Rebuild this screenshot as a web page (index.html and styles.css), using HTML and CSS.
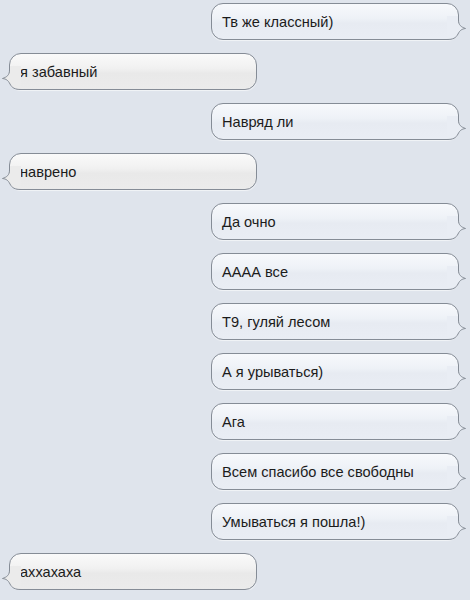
FILE: index.html
```html
<!DOCTYPE html>
<html lang="ru">
<head>
  <meta charset="UTF-8">
  <meta name="viewport" content="width=device-width, initial-scale=1.0">
  <title>Сообщения</title>
  <link rel="stylesheet" href="styles.css">
</head>
<body>

<div class="chat">
  <!-- Переписка -->
  <div class="bubble mine">Тв же классный)<svg class="tail" width="20" height="24" viewBox="0 0 20 24"><path class="tail-fill" d="M0 0 L11.5 0 L11.5 4 C11.5 9 14 11 18.5 12.5 C15 13 13 14 11 18 C9 22 6 23.5 0 23.5 Z"/><path class="tail-line" d="M11.5 0 L11.5 4 C11.5 9 14 11 18.5 12.5 C15 13 13 14 11 18 C9 22 6 23.5 0 23.5"/></svg></div>
  <div class="bubble theirs">я забавный<svg class="tail" width="20" height="24" viewBox="0 0 20 24"><path class="tail-fill" d="M0 0 L11.5 0 L11.5 4 C11.5 9 14 11 18.5 12.5 C15 13 13 14 11 18 C9 22 6 23.5 0 23.5 Z"/><path class="tail-line" d="M11.5 0 L11.5 4 C11.5 9 14 11 18.5 12.5 C15 13 13 14 11 18 C9 22 6 23.5 0 23.5"/></svg></div>
  <div class="bubble mine">Навряд ли<svg class="tail" width="20" height="24" viewBox="0 0 20 24"><path class="tail-fill" d="M0 0 L11.5 0 L11.5 4 C11.5 9 14 11 18.5 12.5 C15 13 13 14 11 18 C9 22 6 23.5 0 23.5 Z"/><path class="tail-line" d="M11.5 0 L11.5 4 C11.5 9 14 11 18.5 12.5 C15 13 13 14 11 18 C9 22 6 23.5 0 23.5"/></svg></div>
  <div class="bubble theirs">наврено<svg class="tail" width="20" height="24" viewBox="0 0 20 24"><path class="tail-fill" d="M0 0 L11.5 0 L11.5 4 C11.5 9 14 11 18.5 12.5 C15 13 13 14 11 18 C9 22 6 23.5 0 23.5 Z"/><path class="tail-line" d="M11.5 0 L11.5 4 C11.5 9 14 11 18.5 12.5 C15 13 13 14 11 18 C9 22 6 23.5 0 23.5"/></svg></div>
  <div class="bubble mine">Да очно<svg class="tail" width="20" height="24" viewBox="0 0 20 24"><path class="tail-fill" d="M0 0 L11.5 0 L11.5 4 C11.5 9 14 11 18.5 12.5 C15 13 13 14 11 18 C9 22 6 23.5 0 23.5 Z"/><path class="tail-line" d="M11.5 0 L11.5 4 C11.5 9 14 11 18.5 12.5 C15 13 13 14 11 18 C9 22 6 23.5 0 23.5"/></svg></div>
  <div class="bubble mine">АААА все<svg class="tail" width="20" height="24" viewBox="0 0 20 24"><path class="tail-fill" d="M0 0 L11.5 0 L11.5 4 C11.5 9 14 11 18.5 12.5 C15 13 13 14 11 18 C9 22 6 23.5 0 23.5 Z"/><path class="tail-line" d="M11.5 0 L11.5 4 C11.5 9 14 11 18.5 12.5 C15 13 13 14 11 18 C9 22 6 23.5 0 23.5"/></svg></div>
  <div class="bubble mine">Т9, гуляй лесом<svg class="tail" width="20" height="24" viewBox="0 0 20 24"><path class="tail-fill" d="M0 0 L11.5 0 L11.5 4 C11.5 9 14 11 18.5 12.5 C15 13 13 14 11 18 C9 22 6 23.5 0 23.5 Z"/><path class="tail-line" d="M11.5 0 L11.5 4 C11.5 9 14 11 18.5 12.5 C15 13 13 14 11 18 C9 22 6 23.5 0 23.5"/></svg></div>
  <div class="bubble mine">А я урываться)<svg class="tail" width="20" height="24" viewBox="0 0 20 24"><path class="tail-fill" d="M0 0 L11.5 0 L11.5 4 C11.5 9 14 11 18.5 12.5 C15 13 13 14 11 18 C9 22 6 23.5 0 23.5 Z"/><path class="tail-line" d="M11.5 0 L11.5 4 C11.5 9 14 11 18.5 12.5 C15 13 13 14 11 18 C9 22 6 23.5 0 23.5"/></svg></div>
  <div class="bubble mine">Ага<svg class="tail" width="20" height="24" viewBox="0 0 20 24"><path class="tail-fill" d="M0 0 L11.5 0 L11.5 4 C11.5 9 14 11 18.5 12.5 C15 13 13 14 11 18 C9 22 6 23.5 0 23.5 Z"/><path class="tail-line" d="M11.5 0 L11.5 4 C11.5 9 14 11 18.5 12.5 C15 13 13 14 11 18 C9 22 6 23.5 0 23.5"/></svg></div>
  <div class="bubble mine">Всем спасибо все свободны<svg class="tail" width="20" height="24" viewBox="0 0 20 24"><path class="tail-fill" d="M0 0 L11.5 0 L11.5 4 C11.5 9 14 11 18.5 12.5 C15 13 13 14 11 18 C9 22 6 23.5 0 23.5 Z"/><path class="tail-line" d="M11.5 0 L11.5 4 C11.5 9 14 11 18.5 12.5 C15 13 13 14 11 18 C9 22 6 23.5 0 23.5"/></svg></div>
  <div class="bubble mine">Умываться я пошла!)<svg class="tail" width="20" height="24" viewBox="0 0 20 24"><path class="tail-fill" d="M0 0 L11.5 0 L11.5 4 C11.5 9 14 11 18.5 12.5 C15 13 13 14 11 18 C9 22 6 23.5 0 23.5 Z"/><path class="tail-line" d="M11.5 0 L11.5 4 C11.5 9 14 11 18.5 12.5 C15 13 13 14 11 18 C9 22 6 23.5 0 23.5"/></svg></div>
  <div class="bubble theirs">аххахаха<svg class="tail" width="20" height="24" viewBox="0 0 20 24"><path class="tail-fill" d="M0 0 L11.5 0 L11.5 4 C11.5 9 14 11 18.5 12.5 C15 13 13 14 11 18 C9 22 6 23.5 0 23.5 Z"/><path class="tail-line" d="M11.5 0 L11.5 4 C11.5 9 14 11 18.5 12.5 C15 13 13 14 11 18 C9 22 6 23.5 0 23.5"/></svg></div>
</div>

</body>
</html>
```

FILE: styles.css
```css
/* Estilos generales */
body {
  font-family: "Liberation Sans", Arial, sans-serif;
  background: #dfe4ec;
  margin: 0;
  padding: 0;
}
.chat {
  display: flex;
  flex-direction: column;
  gap: 13px;
  padding: 3px 11px 0 9px;
}
.bubble {
  position: relative;
  box-sizing: border-box;
  width: 248px;
  height: 37px;
  padding: 0 10px;
  display: flex;
  align-items: center;
  font-size: 14.6px;
  color: #1b1b1b;
  border: 1px solid #858c96;
  border-radius: 12px;
  box-shadow: 0 1px 1px rgba(255,255,255,0.6);
}
/* Mensajes propios (derecha) */
.bubble.mine {
  align-self: flex-end;
  background: linear-gradient(#f7f9fc 0%, #eef2f7 40%, #e7ebf2 55%, #e9edf4 100%);
}
/* Mensajes recibidos (izquierda) */
.bubble.theirs {
  align-self: flex-start;
  background: linear-gradient(#fafafa 0%, #f1f1f1 40%, #e9e9e9 55%, #ebebeb 100%);
}
.tail {
  position: absolute;
  bottom: -1px;
  right: -9px;
}
.bubble.theirs .tail {
  right: auto;
  left: -9px;
  transform: scaleX(-1);
}
.tail-line {
  fill: none;
  stroke: #858c96;
  stroke-width: 1;
}
.mine .tail-fill {
  fill: #e9edf4;
}
.theirs .tail-fill {
  fill: #ebebeb;
}
```
